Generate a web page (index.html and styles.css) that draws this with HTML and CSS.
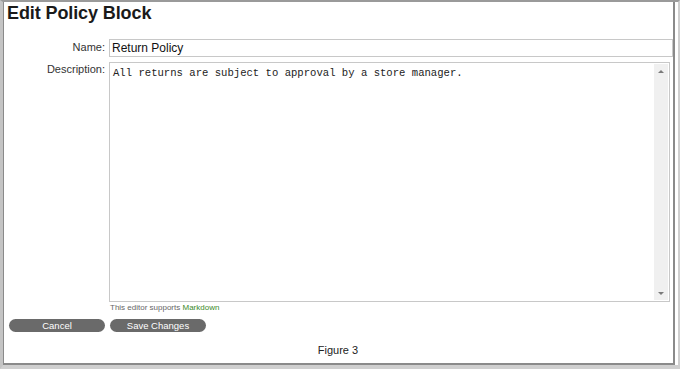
FILE: index.html
```html
<!DOCTYPE html>
<html>
<head>
<meta charset="utf-8">
<link rel="stylesheet" href="styles.css">
</head>
<body>
<div class="frame">
  <div class="sheet">
    <h1 class="title">Edit Policy Block</h1>
    <div class="form">
      <label class="label name-label">Name:</label>
      <div class="input">Return Policy</div>
      <label class="label desc-label">Description:</label>
      <div class="textarea">
        <div class="ta-text">All returns are subject to approval by a store manager.</div>
        <div class="scrollbar">
          <span class="arrow up"></span>
          <span class="arrow down"></span>
        </div>
      </div>
      <div></div>
      <div class="hint">This editor supports <span class="md">Markdown</span></div>
    </div>
    <div class="buttons">
      <span class="btn">Cancel</span>
      <span class="btn">Save Changes</span>
    </div>
    <div class="caption">Figure 3</div>
  </div>
</div>
</body>
</html>
```
FILE: styles.css
```css
html, body {
  margin: 0;
  padding: 0;
  background: #fff;
}
body {
  font-family: "Liberation Sans", Arial, sans-serif;
  color: #222;
}
.frame {
  width: 680px;
  height: 369px;
  box-sizing: border-box;
  border-style: solid;
  border-color: #9a9a9a #cfcfcf #cfcfcf #c4c4c4;
  border-width: 2px 2px 4px 3px;
  padding-right: 3px;
  background: #fff;
}
.sheet {
  height: 100%;
  box-sizing: border-box;
  border-left: 1px solid #8a8a8a;
  border-right: 2px solid #8a8a8a;
  border-bottom: 2px solid #8a8a8a;
  padding: 1px 0 0 3px;
  display: flex;
  flex-direction: column;
}
.title {
  margin: 0;
  font-size: 18px;
  line-height: 20px;
  font-weight: bold;
  color: #1a1a1a;
  letter-spacing: -0.1px;
}
.form {
  margin-top: 16px;
  display: grid;
  grid-template-columns: 98px 1fr;
  column-gap: 4px;
  row-gap: 5px;
  align-items: start;
}
.label {
  text-align: right;
  font-size: 11px;
  color: #333;
  line-height: 14px;
}
.name-label { padding-top: 1px; }
.desc-label { padding-top: 0; }
.input {
  height: 18px;
  box-sizing: border-box;
  border: 1px solid #c8c8c8;
  font-size: 12px;
  line-height: 16px;
  padding-left: 2px;
  color: #111;
}
.textarea {
  margin-right: 3px;
  height: 240px;
  box-sizing: border-box;
  border: 1px solid #c8c8c8;
  display: flex;
}
.ta-text {
  flex: 1;
  font-family: "Liberation Mono", "Courier New", monospace;
  font-size: 10.6px;
  line-height: 14px;
  padding: 3px 0 0 3px;
  color: #222;
}
.scrollbar {
  width: 14px;
  margin: 1px 1px 1px 0;
  background: #f0f0f0;
  display: flex;
  flex-direction: column;
  justify-content: space-between;
  align-items: center;
  padding: 6px 0 5px;
  box-sizing: border-box;
}
.arrow {
  width: 0;
  height: 0;
  border-left: 3px solid transparent;
  border-right: 3px solid transparent;
}
.arrow.up { border-bottom: 3px solid #7a7a7a; }
.arrow.down { border-top: 3px solid #7a7a7a; }
.hint {
  margin-top: -4px;
  font-size: 8px;
  line-height: 10px;
  color: #666;
  padding-left: 1px;
}
.md { color: #3a8a2a; }
.buttons {
  margin-top: 6px;
  padding-left: 2px;
  display: flex;
  gap: 5px;
}
.btn {
  width: 96px;
  height: 13px;
  border-radius: 7px;
  background: #6a6a6a;
  color: #fff;
  font-size: 9.5px;
  line-height: 13px;
  text-align: center;
}
.caption {
  margin-top: 12px;
  text-align: center;
  font-size: 11px;
  color: #222;
  padding-right: 4px;
}
```
